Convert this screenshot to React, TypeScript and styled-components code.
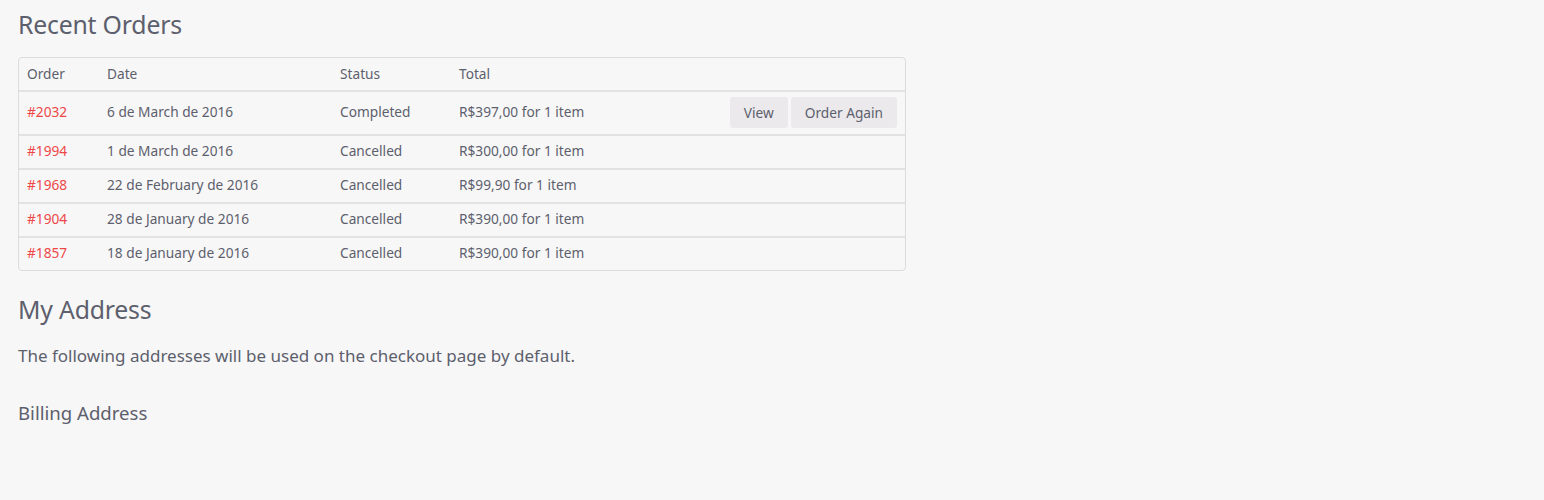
import React from "react";
import styled, { createGlobalStyle } from "styled-components";

const Global = createGlobalStyle`
  html, body { margin: 0; padding: 0; background: #f7f7f7; }
  body { font-family: "Noto Sans", "Open Sans", sans-serif; color: #5d5f6d; }
`;

const Page = styled.main`
  padding: 8px 18px 0 18px;
  width: 888px;
`;

const Heading = styled.h2`
  font-size: 24.8px;
  font-weight: 400;
  margin: 0 0 17px 0;
  line-height: 32px;
  color: #5d5f6d;
  letter-spacing: -0.2px;
`;

const SubHeading = styled.h3`
  font-size: 18.6px;
  font-weight: 400;
  margin: 0;
  line-height: 26px;
  color: #5d5f6d;
`;

const Para = styled.p`
  font-size: 17px;
  margin: 19px 0 32px;
  line-height: 24px;
`;

const TableWrap = styled.div`
  border: 1px solid #dcdcdc;
  border-radius: 4px;
  overflow: hidden;
  margin-bottom: 22px;
`;

const Table = styled.table`
  width: 100%;
  border-collapse: collapse;
  font-size: 13.7px;
`;

const Th = styled.th<{ $w?: number }>`
  text-align: left;
  font-weight: 400;
  height: 31px;
  padding: 0 8px 1px;
  color: #5d5f6d;
  ${(p) => (p.$w ? `width: ${p.$w}px;` : "")}
`;

const Td = styled.td<{ $right?: boolean }>`
  border-top: 2px solid #e2e2e2;
  padding: 0 8px 3px;
  height: 29px;
  text-align: ${(p) => (p.$right ? "right" : "left")};
  white-space: nowrap;
`;

const ActionTd = styled(Td)`
  padding: 5px 8px 6px;
`;

const OrderLink = styled.a`
  color: #ee4747;
  text-decoration: none;
`;

const Btn = styled.button`
  font-family: inherit;
  font-size: 13.7px;
  color: #5d5f6d;
  background: #ebe9ec;
  border: none;
  border-radius: 3px;
  height: 31px;
  padding: 0 14px;
  margin-left: 3px;
`;

const BtnRow = styled.div`
  display: flex;
  justify-content: flex-end;
`;

const orders = [
  { id: "#2032", date: "6 de March de 2016", status: "Completed", total: "R$397,00 for 1 item", actions: true },
  { id: "#1994", date: "1 de March de 2016", status: "Cancelled", total: "R$300,00 for 1 item" },
  { id: "#1968", date: "22 de February de 2016", status: "Cancelled", total: "R$99,90 for 1 item" },
  { id: "#1904", date: "28 de January de 2016", status: "Cancelled", total: "R$390,00 for 1 item" },
  { id: "#1857", date: "18 de January de 2016", status: "Cancelled", total: "R$390,00 for 1 item" },
];

export default function App() {
  return (
    <>
      <Global />
      <Page>
        <Heading>Recent Orders</Heading>
        <TableWrap>
          <Table>
            <thead>
              <tr>
                <Th $w={64}>Order</Th>
                <Th $w={217}>Date</Th>
                <Th $w={103}>Status</Th>
                <Th>Total</Th>
                <Th />
              </tr>
            </thead>
            <tbody>
              {orders.map((o) => (
                <tr key={o.id}>
                  <Td><OrderLink href="#">{o.id}</OrderLink></Td>
                  <Td>{o.date}</Td>
                  <Td>{o.status}</Td>
                  <Td>{o.total}</Td>
                  {o.actions ? (
                    <ActionTd $right>
                      <BtnRow>
                        <Btn>View</Btn>
                        <Btn>Order Again</Btn>
                      </BtnRow>
                    </ActionTd>
                  ) : (
                    <Td $right />
                  )}
                </tr>
              ))}
            </tbody>
          </Table>
        </TableWrap>
        <Heading>My Address</Heading>
        <Para>The following addresses will be used on the checkout page by default.</Para>
        <SubHeading>Billing Address</SubHeading>
      </Page>
    </>
  );
}
